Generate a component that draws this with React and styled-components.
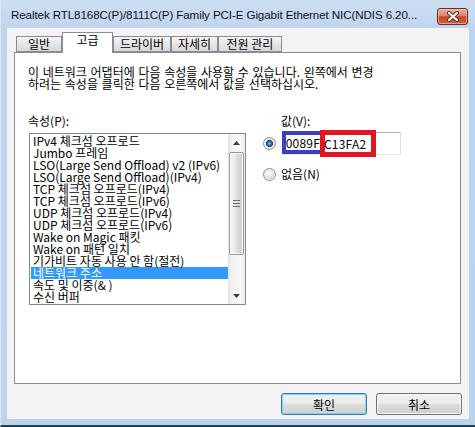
import React from 'react';
import styled, { createGlobalStyle } from 'styled-components';

const GlobalStyle = createGlobalStyle`
  html, body { margin: 0; padding: 0; background: #bfd4ee; }
  body { font-family: "Noto Sans CJK KR", "Noto Sans", sans-serif; }
  * { box-sizing: border-box; }
`;

const KR = `"Noto Sans CJK KR", "Noto Sans", sans-serif`;

const Window = styled.div`
  width: 475px;
  height: 427px;
  display: flex;
  flex-direction: column;
  background: linear-gradient(#cddff3 0px, #bfd4ee 30px, #bcd2ed 100%);
  border-left: 1px solid #dce8f6;
  border-bottom: 2px solid #1d4352;
  overflow: hidden;
`;

const TitleBar = styled.div`
  height: 28px;
  flex: none;
  display: flex;
  align-items: flex-start;
  justify-content: space-between;
  padding: 0 7px 0 10px;
`;

const Title = styled.div`
  margin-top: 7px;
  font-family: "Liberation Sans", Arial, sans-serif;
  font-size: 11.6px;
  line-height: 16px;
  color: #111;
  white-space: nowrap;
  letter-spacing: -0.1px;
`;

const CloseButton = styled.div`
  margin-top: 8px;
  width: 31px;
  height: 17px;
  border: 1px solid #6b2b20;
  border-radius: 3px;
  background: linear-gradient(#ecb1a3 0%, #dc7f68 45%, #c7452c 52%, #d45e40 100%);
  box-shadow: inset 0 0 0 1px rgba(255, 210, 200, 0.55);
  display: flex;
  align-items: center;
  justify-content: center;
`;

const Client = styled.div`
  flex: 1;
  margin: 0 6px 6px 6px;
  background: #f5f2f6;
  display: flex;
  flex-direction: column;
  padding-top: 4px;
`;

const TabStrip = styled.div`
  height: 20px;
  display: flex;
  align-items: flex-end;
  padding-left: 9px;
`;

const Tab = styled.div`
  position: relative;
  width: ${p => p.$w}px;
  height: ${p => (p.$active ? 21 : 16)}px;
  margin-bottom: ${p => (p.$active ? -1 : 0)}px;
  z-index: ${p => (p.$active ? 1 : 0)};
  border: 1px solid #898c95;
  border-bottom: ${p => (p.$active ? 'none' : '1px solid #898c95')};
  background: ${p => (p.$active ? '#ffffff' : 'linear-gradient(#f4f4f4, #e6e6e6 50%, #d9d9d9)')};
  font-family: ${KR};
  font-size: 12px;
  line-height: ${p => (p.$active ? 14 : 13)}px;
  color: #000;
  text-align: center;
  white-space: nowrap;
`;

const Panel = styled.div`
  height: 332px;
  margin: 0 8px 0 7px;
  border: 1px solid #898c95;
  background: #ffffff;
  padding: 13px 13px 0 13px;
  display: flex;
  flex-direction: column;
  font-family: ${KR};
  font-size: 12px;
  color: #000;
`;

const Description = styled.div`
  line-height: 12px;
  white-space: nowrap;
  word-spacing: 1px;
`;

const Columns = styled.div`
  margin-top: 25px;
  display: flex;
  align-items: flex-start;
`;

const LeftColumn = styled.div`
  display: flex;
  flex-direction: column;
`;

const RightColumn = styled.div`
  margin-left: 17px;
  display: flex;
  flex-direction: column;
`;

const FieldLabel = styled.div`
  line-height: 12px;
  height: 12px;
  padding-left: ${p => p.$indent || 0}px;
  white-space: nowrap;
`;

const ListBox = styled.div`
  margin: 6px 0 0 1px;
  width: 217px;
  height: 172px;
  border: 1px solid #828790;
  padding: 1px 0 1px 1px;
  display: flex;
  background: #fff;
`;

const Rows = styled.div`
  flex: 1;
`;

const Row = styled.div`
  height: 12px;
  line-height: 12px;
  padding-left: 2px;
  white-space: nowrap;
  color: ${p => (p.$selected ? '#fff' : '#000')};
  background: ${p => (p.$selected ? '#3399ff' : 'transparent')};
`;

const ScrollBar = styled.div`
  width: 17px;
  margin: -1px 0;
  display: flex;
  flex-direction: column;
  background: linear-gradient(to right, #e6e6e6, #f4f4f4 30%, #f7f7f7 70%, #ececec);
`;

const ArrowButton = styled.div`
  height: 17px;
  flex: none;
  display: flex;
  align-items: center;
  justify-content: center;
`;

const Thumb = styled.div`
  margin: 1px 1px 0 1px;
  height: 103px;
  flex: none;
  border: 1px solid #979797;
  border-radius: 2px;
  background: linear-gradient(to right, #f4f4f4, #ebebeb 40%, #dcdcdc 55%, #cfcfcf);
  box-shadow: inset 0 0 0 1px #fbfbfb;
  display: flex;
  align-items: center;
  justify-content: center;
`;

const Track = styled.div`
  flex: 1;
`;

const Radio = styled.span`
  width: 13px;
  height: 13px;
  flex: none;
  border-radius: 50%;
  border: 1px solid #8f8f8f;
  background: ${p =>
    p.$checked
      ? 'radial-gradient(circle at 50% 50%, #8fc3ef 0px, #2a6db5 2px, #153d75 3.2px, #eaeaea 3.8px, #d2d2d2 6px)'
      : 'radial-gradient(circle at 45% 40%, #ffffff 0px, #ececec 3px, #d0d0d0 6px)'};
  box-shadow: inset 0 0 0 1px #f4f4f4;
`;

const ValueRow = styled.div`
  margin-top: 5px;
  height: 23px;
  display: flex;
  align-items: center;
`;

const EditBox = styled.div`
  margin-left: 6px;
  width: 119px;
  height: 23px;
  border-top: 1px solid #abadb3;
  border-left: 1px solid #e2e3ea;
  border-right: 1px solid #dbdfe6;
  border-bottom: 1px solid #e3e9ef;
  background: #fff;
  display: flex;
  align-items: center;
`;

const Mark = styled.div`
  flex: none;
  width: ${p => p.$w}px;
  height: ${p => p.$h}px;
  margin-left: ${p => p.$ml}px;
  margin-top: ${p => p.$mt || 0}px;
  border: ${p => p.$bw}px solid ${p => p.$color};
  background: #fff;
  overflow: hidden;
  display: flex;
  align-items: center;
  justify-content: ${p => p.$justify || 'flex-start'};
  font-size: 12px;
  line-height: 14px;
  white-space: nowrap;
  color: #000;
`;

const MarkText = styled.span`
  margin-left: ${p => p.$ml || 0}px;
  letter-spacing: 0.2px;
`;

const NoneRow = styled.div`
  margin-top: 12px;
  height: 14px;
  display: flex;
  align-items: center;
`;

const RadioLabel = styled.span`
  margin-left: 5px;
  line-height: 12px;
  white-space: nowrap;
`;

const ButtonRow = styled.div`
  display: flex;
  justify-content: flex-end;
  gap: 9px;
  padding: 9px 7px 0 0;
`;

const Button = styled.div`
  width: 86px;
  height: 22px;
  border: 1px solid ${p => (p.$default ? '#2f7cc0' : '#707070')};
  border-radius: 3px;
  background: linear-gradient(#f2f2f2 0%, #ebebeb 48%, #dddddd 52%, #cfcfcf 100%);
  box-shadow: inset 0 0 0 1px ${p => (p.$default ? '#7fd3f7' : '#fbfbfb')};
  display: flex;
  align-items: center;
  justify-content: center;
  font-family: ${KR};
  font-size: 12px;
  color: #000;
`;

const items = [
  'IPv4 체크섬 오프로드',
  'Jumbo 프레임',
  'LSO(Large Send Offload) v2 (IPv6)',
  'LSO(Large Send Offload)(IPv4)',
  'TCP 체크섬 오프로드(IPv4)',
  'TCP 체크섬 오프로드(IPv6)',
  'UDP 체크섬 오프로드(IPv4)',
  'UDP 체크섬 오프로드(IPv6)',
  'Wake on Magic 패킷',
  'Wake on 패턴 일치',
  '기가비트 자동 사용 안 함(절전)',
  '네트워크 주소',
  '속도 및 이중(& )',
  '수신 버퍼',
];

const tabs = [
  { label: '일반', w: 46 },
  { label: '고급', w: 51, active: true },
  { label: '드라이버', w: 58 },
  { label: '자세히', w: 47 },
  { label: '전원 관리', w: 64 },
];

const CloseX = () => (
  <svg width="14" height="11" viewBox="0 0 14 11">
    <path d="M3 2 L11 9 M11 2 L3 9" stroke="#5a2a22" strokeWidth="4" strokeLinecap="round" />
    <path d="M3 2 L11 9 M11 2 L3 9" stroke="#ffffff" strokeWidth="2.2" strokeLinecap="round" />
  </svg>
);

const UpArrow = () => (
  <svg width="7" height="4" viewBox="0 0 7 4">
    <polygon points="0,4 7,4 3.5,0" fill="#3c3c3c" />
  </svg>
);

const DownArrow = () => (
  <svg width="7" height="4" viewBox="0 0 7 4">
    <polygon points="0,0 7,0 3.5,4" fill="#3c3c3c" />
  </svg>
);

const Grip = () => (
  <svg width="7" height="7" viewBox="0 0 7 7">
    <path d="M0 0.5 H7 M0 3.5 H7 M0 6.5 H7" stroke="#6b6b6b" strokeWidth="1" />
  </svg>
);

export default function App() {
  return (
    <>
      <GlobalStyle />
      <Window>
        <TitleBar>
          <Title>Realtek RTL8168C(P)/8111C(P) Family PCI-E Gigabit Ethernet NIC(NDIS 6.20...</Title>
          <CloseButton>
            <CloseX />
          </CloseButton>
        </TitleBar>
        <Client>
          <TabStrip>
            {tabs.map(t => (
              <Tab key={t.label} $w={t.w} $active={t.active}>
                {t.label}
              </Tab>
            ))}
          </TabStrip>
          <Panel>
            <Description>
              이 네트워크 어댑터에 다음 속성을 사용할 수 있습니다. 왼쪽에서 변경
              <br />
              하려는 속성을 클릭한 다음 오른쪽에서 값을 선택하십시오.
            </Description>
            <Columns>
              <LeftColumn>
                <FieldLabel>속성(P):</FieldLabel>
                <ListBox>
                  <Rows>
                    {items.map(it => (
                      <Row key={it} $selected={it === '네트워크 주소'}>
                        {it}
                      </Row>
                    ))}
                  </Rows>
                  <ScrollBar>
                    <ArrowButton>
                      <UpArrow />
                    </ArrowButton>
                    <Thumb>
                      <Grip />
                    </Thumb>
                    <Track />
                    <ArrowButton>
                      <DownArrow />
                    </ArrowButton>
                  </ScrollBar>
                </ListBox>
              </LeftColumn>
              <RightColumn>
                <FieldLabel $indent={18}>값(V):</FieldLabel>
                <ValueRow>
                  <Radio $checked />
                  <EditBox>
                    <Mark $w={42} $h={23} $ml={-1} $mt={-2} $bw={4} $color="#3b3fc0" $justify="flex-end">
                      <MarkText>00089F</MarkText>
                    </Mark>
                    <Mark $w={56} $h={27} $ml={-4} $bw={5} $color="#e3161f">
                      <MarkText $ml={-1}>C13FA2</MarkText>
                    </Mark>
                  </EditBox>
                </ValueRow>
                <NoneRow>
                  <Radio />
                  <RadioLabel>없음(N)</RadioLabel>
                </NoneRow>
              </RightColumn>
            </Columns>
          </Panel>
          <ButtonRow>
            <Button $default>확인</Button>
            <Button>취소</Button>
          </ButtonRow>
        </Client>
      </Window>
    </>
  );
}
